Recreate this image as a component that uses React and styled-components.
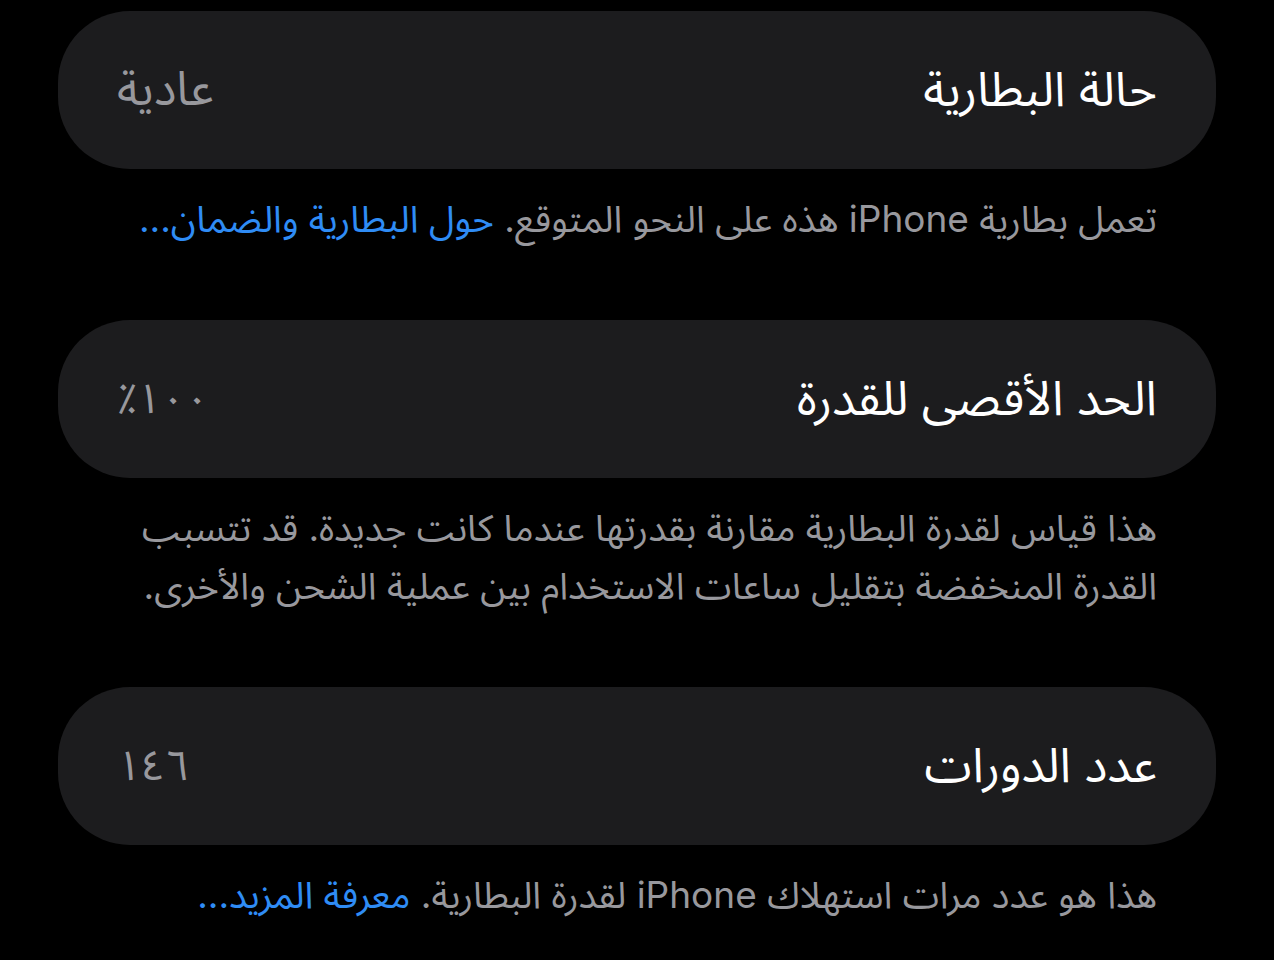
import React from "react";
import styled, { createGlobalStyle } from "styled-components";

const GlobalStyle = createGlobalStyle`
  html, body {
    margin: 0;
    padding: 0;
    background: #000;
  }
  body {
    font-family: "Inter", "Noto Sans Arabic", "DejaVu Sans", sans-serif;
    -webkit-font-smoothing: antialiased;
  }
`;

const Page = styled.div`
  direction: rtl;
  background: #000;
  min-height: 960px;
  padding: 11px 58px 0;
  box-sizing: border-box;
`;

const Section = styled.section`
  display: flex;
  flex-direction: column;
  margin-bottom: 72px;
`;

const Card = styled.div`
  display: flex;
  align-items: center;
  justify-content: space-between;
  height: 158px;
  padding: 0 59px;
  border-radius: 72px;
  background: #1c1c1e;
  box-sizing: border-box;
`;

const Title = styled.span`
  color: #ffffff;
  font-size: 48px;
`;

// Arabic-Indic digits in this font are wide, so numbers get a smaller size
const Value = styled.span`
  color: #98989d;
  font-size: ${(p) => (p.$numeric ? "42px" : "47px")};
`;

const Footnote = styled.p`
  margin: 21px 0 0;
  padding: 0 59px;
  color: #98989d;
  font-size: 37px;
  line-height: 58px;
`;

const Link = styled.a`
  color: #2f8cf5;
  text-decoration: none;
`;

const rows = [
  {
    title: "حالة البطارية",
    value: "عادية",
    note: "تعمل بطارية iPhone هذه على النحو المتوقع. ",
    link: "حول البطارية والضمان...",
  },
  {
    title: "الحد الأقصى للقدرة",
    value: "١٠٠٪",
    numeric: true,
    note: "هذا قياس لقدرة البطارية مقارنة بقدرتها عندما كانت جديدة. قد تتسبب القدرة المنخفضة بتقليل ساعات الاستخدام بين عملية الشحن والأخرى.",
  },
  {
    title: "عدد الدورات",
    value: "١٤٦",
    numeric: true,
    note: "هذا هو عدد مرات استهلاك iPhone لقدرة البطارية. ",
    link: "معرفة المزيد...",
  },
];

export default function App() {
  return (
    <>
      <GlobalStyle />
      <Page>
        {rows.map((row) => (
          <Section key={row.title}>
            <Card>
              <Title>{row.title}</Title>
              <Value $numeric={row.numeric}>{row.value}</Value>
            </Card>
            <Footnote>
              {row.note}
              {row.link && <Link href="#">{row.link}</Link>}
            </Footnote>
          </Section>
        ))}
      </Page>
    </>
  );
}
